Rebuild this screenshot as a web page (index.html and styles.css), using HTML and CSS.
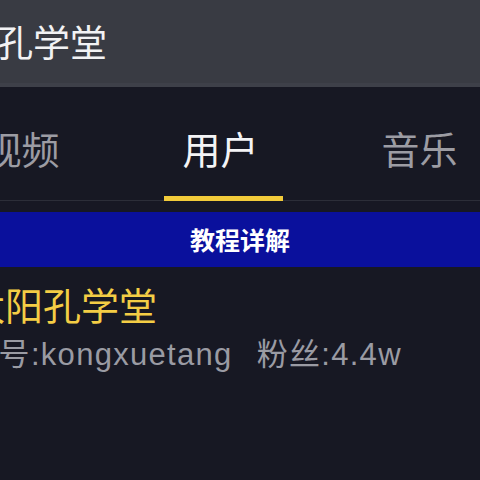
FILE: index.html
```html
<!DOCTYPE html>
<html lang="zh-CN">
<head>
    <meta charset="UTF-8">
    <meta name="viewport" content="width=device-width, initial-scale=1.0">
    <title>太阳孔学堂</title>
    <link rel="stylesheet" href="styles.css">
</head>
<body>
    <div class="topbar">
        <div class="title">太阳孔学堂</div>
    </div>

    <div class="tabs">
        <div class="tab">视频</div>
        <div class="tab active">用户</div>
        <div class="tab">音乐</div>
    </div>

    <div class="banner">教程详解</div>

    <div class="user">
        <div class="name">太阳孔学堂</div>
        <div class="meta">抖音号:kongxuetang<span class="fans">粉丝:4.4w</span></div>
    </div>
</body>
</html>
```

FILE: styles.css
```css
html, body {
    margin: 0;
    padding: 0;
}
body {
    width: 480px;
    height: 480px;
    overflow: hidden;
    background: #171823;
    font-family: "Noto Sans CJK SC", "Noto Sans", sans-serif;
}
.topbar {
    height: 83px;
    background: #393b43;
    border-bottom: 4px solid #3e4049;
    display: flex;
    align-items: center;
    overflow: hidden;
}
.title {
    font-size: 37px;
    color: #f2f2f4;
    white-space: nowrap;
    margin-left: -78px;
    margin-top: -2px;
}
.tabs {
    display: flex;
    margin-left: -78px;
    height: 113px;
    border-bottom: 1px solid #2c2e38;
}
.tab {
    width: 199px;
    flex: none;
    font-size: 38px;
    color: #9c9ca3;
    text-align: center;
    padding-top: 33px;
    box-sizing: border-box;
    position: relative;
}
.tab.active {
    color: #f4f4f6;
}
.tab.active::after {
    content: "";
    position: absolute;
    left: 43px;
    bottom: -1px;
    width: 119px;
    height: 5px;
    background: #f2cb3a;
}
.banner {
    margin-top: 11px;
    height: 55px;
    background: #0a109c;
    color: #ffffff;
    font-size: 25px;
    font-weight: bold;
    text-align: center;
    line-height: 55px;
}
.user {
    padding-top: 12px;
    white-space: nowrap;
}
.name {
    font-size: 38px;
    color: #f4cd45;
    margin-left: -33px;
    line-height: 50px;
}
.meta {
    font-family: "Liberation Sans", "Noto Sans CJK SC", sans-serif;
    font-size: 31px;
    letter-spacing: 1.3px;
    color: #9a9ba3;
    margin-left: -66px;
    margin-top: 6px;
    line-height: 40px;
}
.fans {
    margin-left: 24px;
}
```
